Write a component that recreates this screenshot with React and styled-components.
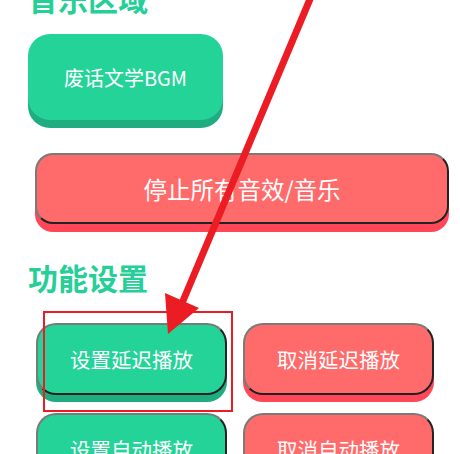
import React from "react";
import styled, { createGlobalStyle, css } from "styled-components";

const GlobalStyle = createGlobalStyle`
  html, body {
    margin: 0;
    padding: 0;
    overflow: hidden;
    background: #fff;
    font-family: "Noto Sans CJK SC", "Noto Sans", sans-serif;
  }
`;

const Page = styled.div`
  position: relative;
  width: 460px;
  height: 454px;
  overflow: hidden;
`;

const Content = styled.div`
  margin-top: -19px;
  padding-left: 28px;
  display: flex;
  flex-direction: column;
  align-items: flex-start;
`;

const SectionTitle = styled.h2`
  margin: ${(p) => p.$mt || 0}px 0 0;
  font-size: 30px;
  line-height: 34px;
  font-weight: 700;
  color: #27cf98;
`;

const colors = {
  green: { face: "#24d397", shadow: "#1fad7f" },
  red: { face: "#ff6b6b", shadow: "#ff4757" },
};

const bevel = css`
  border: 2px solid;
  border-color: #7a7a7a #222 #222 #7a7a7a;
`;

const Button = styled.button`
  box-sizing: border-box;
  font-family: inherit;
  color: #fff;
  cursor: pointer;
  padding: 0;
  background: ${(p) => colors[p.$tone].face};
  box-shadow: 0 ${(p) => p.$drop || 7}px 0 ${(p) => colors[p.$tone].shadow};
`;

const BgmButton = styled(Button)`
  margin-top: 19px;
  width: 195px;
  height: 86px;
  border: none;
  border-radius: 22px;
  font-size: 20px;
`;

const StopButton = styled(Button)`
  ${bevel};
  margin: 33px 0 0 7px;
  width: 414px;
  height: 71px;
  border-radius: 18px;
  font-size: 23.5px;
`;

const Grid = styled.div`
  margin: 29px 0 0 8px;
  display: grid;
  grid-template-columns: 191px 191px;
  column-gap: 16px;
  row-gap: 18px;
`;

const Cell = styled.div`
  position: relative;
`;

const GridButton = styled(Button)`
  ${bevel};
  width: 191px;
  height: 72px;
  border-radius: 20px;
  font-size: 20.5px;
`;

const Highlight = styled.div`
  position: absolute;
  left: 7px;
  top: -12px;
  width: 190px;
  height: 101px;
  box-sizing: border-box;
  border: 2px solid #ec1c24;
  pointer-events: none;
`;

const Annotation = styled.svg`
  position: absolute;
  left: 0;
  top: 0;
  pointer-events: none;
`;

const functionButtons = [
  { label: "设置延迟播放", tone: "green", marked: true },
  { label: "取消延迟播放", tone: "red" },
  { label: "设置自动播放", tone: "green" },
  { label: "取消自动播放", tone: "red" },
];

export default function App() {
  return (
    <Page>
      <GlobalStyle />
      <Content>
        <SectionTitle>音乐区域</SectionTitle>
        <BgmButton $tone="green" $drop={8}>废话文学BGM</BgmButton>
        <StopButton $tone="red" $drop={8}>停止所有音效/音乐</StopButton>
        <SectionTitle $mt={36}>功能设置</SectionTitle>
        <Grid>
          {functionButtons.map((b) => (
            <Cell key={b.label}>
              <GridButton $tone={b.tone}>{b.label}</GridButton>
              {b.marked && <Highlight />}
            </Cell>
          ))}
        </Grid>
      </Content>
      <Annotation width="460" height="454" viewBox="0 0 460 454">
        <line x1="313" y1="-8" x2="180" y2="308" stroke="#ec1c24" strokeWidth="7" />
        <polygon points="168,334 165,293 199,308" fill="#ec1c24" />
      </Annotation>
    </Page>
  );
}
